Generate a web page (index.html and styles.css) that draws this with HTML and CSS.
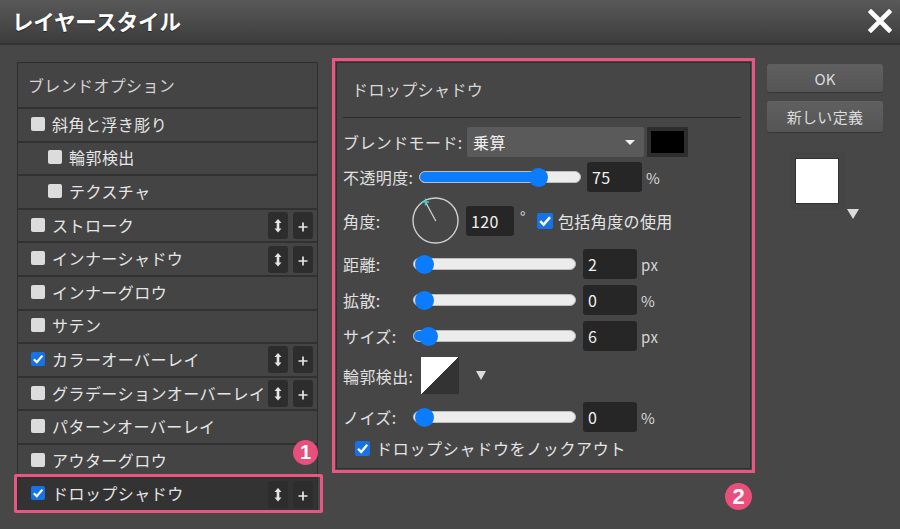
FILE: index.html
```html
<!DOCTYPE html>
<html lang="ja">
<head>
<meta charset="utf-8">
<title>レイヤースタイル</title>
<link rel="stylesheet" href="styles.css">
</head>
<body>
<div class="dialog">
  <header class="titlebar">
    <h1 class="title">レイヤースタイル</h1>
    <svg class="close" width="24" height="24" viewBox="0 0 24 24"><path d="M3 3 L21 21 M21 3 L3 21" stroke="#fff" stroke-width="4.6" stroke-linecap="square"/></svg>
  </header>
  <main class="content">
    <section class="layers">
      <div class="layers-head">ブレンドオプション</div>
      <div class="row"><span class="cb"></span><span class="rtext">斜角と浮き彫り</span></div>
      <div class="row sub"><span class="cb"></span><span class="rtext">輪郭検出</span></div>
      <div class="row sub"><span class="cb"></span><span class="rtext">テクスチャ</span></div>
      <div class="row"><span class="cb"></span><span class="rtext">ストローク</span>
        <span class="tools"><span class="tbtn"><svg width="20" height="27" viewBox="0 0 20 27"><path d="M10 7 L13.5 11 H11.3 V16.5 H13.5 L10 20.5 L6.5 16.5 H8.7 V11 H6.5 Z" fill="#e6e6e6"/></svg></span><span class="tbtn"><svg width="20" height="27" viewBox="0 0 20 27"><path d="M5.5 15 H14.5 M10 10.5 V19.5" stroke="#e6e6e6" stroke-width="1.7"/></svg></span></span></div>
      <div class="row"><span class="cb"></span><span class="rtext">インナーシャドウ</span>
        <span class="tools"><span class="tbtn"><svg width="20" height="27" viewBox="0 0 20 27"><path d="M10 7 L13.5 11 H11.3 V16.5 H13.5 L10 20.5 L6.5 16.5 H8.7 V11 H6.5 Z" fill="#e6e6e6"/></svg></span><span class="tbtn"><svg width="20" height="27" viewBox="0 0 20 27"><path d="M5.5 15 H14.5 M10 10.5 V19.5" stroke="#e6e6e6" stroke-width="1.7"/></svg></span></span></div>
      <div class="row"><span class="cb"></span><span class="rtext">インナーグロウ</span></div>
      <div class="row"><span class="cb"></span><span class="rtext">サテン</span></div>
      <div class="row"><span class="cb checked"><svg width="14" height="14" viewBox="0 0 14 14"><path d="M2.8 7.2 L5.8 10.2 L11.4 3.6" fill="none" stroke="#fff" stroke-width="2.2"/></svg></span><span class="rtext">カラーオーバーレイ</span>
        <span class="tools"><span class="tbtn"><svg width="20" height="27" viewBox="0 0 20 27"><path d="M10 7 L13.5 11 H11.3 V16.5 H13.5 L10 20.5 L6.5 16.5 H8.7 V11 H6.5 Z" fill="#e6e6e6"/></svg></span><span class="tbtn"><svg width="20" height="27" viewBox="0 0 20 27"><path d="M5.5 15 H14.5 M10 10.5 V19.5" stroke="#e6e6e6" stroke-width="1.7"/></svg></span></span></div>
      <div class="row"><span class="cb"></span><span class="rtext">グラデーションオーバーレイ</span>
        <span class="tools"><span class="tbtn"><svg width="20" height="27" viewBox="0 0 20 27"><path d="M10 7 L13.5 11 H11.3 V16.5 H13.5 L10 20.5 L6.5 16.5 H8.7 V11 H6.5 Z" fill="#e6e6e6"/></svg></span><span class="tbtn"><svg width="20" height="27" viewBox="0 0 20 27"><path d="M5.5 15 H14.5 M10 10.5 V19.5" stroke="#e6e6e6" stroke-width="1.7"/></svg></span></span></div>
      <div class="row"><span class="cb"></span><span class="rtext">パターンオーバーレイ</span></div>
      <div class="row"><span class="cb"></span><span class="rtext">アウターグロウ</span></div>
      <div class="row selected"><span class="cb checked"><svg width="14" height="14" viewBox="0 0 14 14"><path d="M2.8 7.2 L5.8 10.2 L11.4 3.6" fill="none" stroke="#fff" stroke-width="2.2"/></svg></span><span class="rtext">ドロップシャドウ</span>
        <span class="tools"><span class="tbtn"><svg width="20" height="27" viewBox="0 0 20 27"><path d="M10 7 L13.5 11 H11.3 V16.5 H13.5 L10 20.5 L6.5 16.5 H8.7 V11 H6.5 Z" fill="#e6e6e6"/></svg></span><span class="tbtn"><svg width="20" height="27" viewBox="0 0 20 27"><path d="M5.5 15 H14.5 M10 10.5 V19.5" stroke="#e6e6e6" stroke-width="1.7"/></svg></span></span></div>
      <span class="badge badge-1">1</span>
    </section>

    <section class="frame">
      <div class="panel">
        <div class="panel-head">ドロップシャドウ</div>

        <div class="prow prow-blend">
          <span class="plabel w-blend">ブレンドモード:</span>
          <div class="select"><span>乗算</span><span class="sel-tri"></span></div>
          <span class="color-swatch"></span>
        </div>

        <div class="prow">
          <span class="plabel w-op">不透明度:</span>
          <div class="slider s-op"><span class="fill" style="width:118px"></span><span class="thumb" style="left:109px"></span></div>
          <span class="num n-op">75</span>
          <span class="unit">%</span>
        </div>

        <div class="prow prow-angle">
          <span class="plabel w-angle">角度:</span>
          <svg class="dial" width="47" height="47" viewBox="0 0 47 47">
            <circle cx="23.5" cy="23.5" r="22.5" fill="none" stroke="#cfcfcf" stroke-width="1.4"/>
            <path d="M23.8 24 L13.5 5" stroke="#cfcfcf" stroke-width="1.3"/>
            <path d="M10 5 H17 M13.5 1.5 V8.5" stroke="#3fd0d0" stroke-width="1.3"/>
          </svg>
          <span class="num n-angle">120</span>
          <span class="unit deg">°</span>
          <span class="cb cb-blue checked"><svg width="16" height="16" viewBox="0 0 14 14"><path d="M2.8 7.2 L5.8 10.2 L11.4 3.6" fill="none" stroke="#fff" stroke-width="2.2"/></svg></span>
          <span class="ctext">包括角度の使用</span>
        </div>

        <div class="prow">
          <span class="plabel">距離:</span>
          <div class="slider"><span class="thumb" style="left:1px"></span></div>
          <span class="num">2</span>
          <span class="unit">px</span>
        </div>

        <div class="prow g6">
          <span class="plabel">拡散:</span>
          <div class="slider"><span class="thumb" style="left:1px"></span></div>
          <span class="num">0</span>
          <span class="unit">%</span>
        </div>

        <div class="prow g6">
          <span class="plabel">サイズ:</span>
          <div class="slider"><span class="fill" style="width:12px"></span><span class="thumb" style="left:5px"></span></div>
          <span class="num">6</span>
          <span class="unit">px</span>
        </div>

        <div class="prow prow-contour g6">
          <span class="plabel w-contour">輪郭検出:</span>
          <span class="contour"></span>
          <span class="tri"></span>
        </div>

        <div class="prow g8">
          <span class="plabel">ノイズ:</span>
          <div class="slider"><span class="thumb" style="left:1px"></span></div>
          <span class="num">0</span>
          <span class="unit">%</span>
        </div>

        <div class="prow prow-ko g6">
          <span class="cb cb-blue checked"><svg width="15" height="15" viewBox="0 0 14 14"><path d="M2.8 7.2 L5.8 10.2 L11.4 3.6" fill="none" stroke="#fff" stroke-width="2.2"/></svg></span>
          <span class="ctext">ドロップシャドウをノックアウト</span>
        </div>
      </div>
      <span class="badge badge-2">2</span>
    </section>

    <aside class="side">
      <button class="btn btn-ok">OK</button>
      <button class="btn btn-new">新しい定義</button>
      <div class="preview">
        <span class="preview-box"></span>
        <span class="tri tri-preview"></span>
      </div>
    </aside>
  </main>
</div>
</body>
</html>
```

FILE: styles.css
```css
* { box-sizing: border-box; }

html, body {
  margin: 0;
  padding: 0;
}

body {
  width: 900px;
  height: 529px;
  overflow: hidden;
  background: #474747;
  font-family: "Noto Sans CJK JP", "Noto Sans", sans-serif;
  color: #e2e2e2;
}

.dialog {
  width: 900px;
  height: 529px;
}

/* title bar */
.titlebar {
  height: 45px;
  display: flex;
  align-items: center;
  justify-content: space-between;
  padding: 0 8px 2px 12px;
  background: linear-gradient(#595959, #3c3c3c);
  border-bottom: 2px solid #333;
}

.title {
  margin: 0;
  font-size: 21.5px;
  font-weight: 700;
  color: #fff;
  letter-spacing: -0.2px;
  line-height: 1;
  text-shadow: 0 1px 1px rgba(0,0,0,0.5);
}

.close { display: block; }

/* content */
.content {
  display: flex;
  align-items: flex-start;
  padding-left: 17px;
}

/* left list */
.layers {
  position: relative;
  width: 301px;
  margin-top: 17px;
  border: 1px solid #2e2e2e;
  background: #444;
}

.layers-head {
  height: 44px;
  display: flex;
  align-items: center;
  padding-left: 10px;
  padding-bottom: 1px;
  font-size: 16px;
  letter-spacing: 0.35px;
  color: #d4d4d4;
}

.row {
  position: relative;
  height: 33.6px;
  display: flex;
  align-items: center;
  padding-left: 13px;
  padding-right: 4px;
  padding-bottom: 2px;
  border-top: 2px solid #313131;
  font-size: 16px;
  letter-spacing: 0.45px;
  color: #e6e6e6;
  white-space: nowrap;
}

.row.sub { padding-left: 30px; }

.row.selected {
  background: #333;
}

.row.selected::after {
  content: "";
  position: absolute;
  left: -4px;
  right: -6px;
  top: -5px;
  bottom: -3px;
  border: 3px solid #ea5682;
  border-radius: 2px;
  pointer-events: none;
}

.rtext {
  margin-left: 7px;
  overflow: hidden;
}

.cb {
  flex: none;
  width: 14px;
  height: 14px;
  border-radius: 2px;
  background: #dcdcdc;
  display: flex;
  align-items: center;
  justify-content: center;
}

.cb.checked { background: #1673e6; }

.tools {
  margin-left: auto;
  display: flex;
  gap: 5px;
  flex: none;
  margin-bottom: -2px;
}

.tbtn {
  width: 20px;
  height: 27px;
  border-radius: 3px;
  background: #2d2d2d;
  display: block;
}

.tbtn svg { display: block; }

.badge {
  position: absolute;
  border-radius: 50%;
  background: #e84f7d;
  color: #fff;
  font-family: "Liberation Sans", Arial, sans-serif;
  font-weight: 700;
  display: flex;
  align-items: center;
  justify-content: center;
}

.badge-1 {
  width: 25px;
  height: 25px;
  left: 275px;
  top: 377px;
  font-size: 20px;
}

.badge-2 {
  width: 27px;
  height: 27px;
  left: 390px;
  top: 422px;
  font-size: 22px;
}

/* middle frame */
.frame {
  position: relative;
  width: 423px;
  height: 415px;
  margin-left: 14px;
  margin-top: 13px;
  border: 3px solid #ea5682;
  padding: 1px;
}

.panel {
  height: 100%;
  border: 1px solid #2f2f2f;
  background: #464646;
  padding: 0 9px 0 6px;
  display: flex;
  flex-direction: column;
}

.panel-head {
  height: 55px;
  flex: none;
  display: flex;
  align-items: center;
  padding-left: 9px;
  padding-bottom: 3px;
  border-bottom: 1px solid #2c2c2c;
  font-size: 16px;
  letter-spacing: 0.4px;
  color: #d8d8d8;
}

.prow {
  display: flex;
  align-items: center;
  height: 30px;
  margin-top: 5px;
  flex: none;
  font-size: 16px;
  letter-spacing: 0.4px;
  color: #e0e0e0;
  white-space: nowrap;
}

.prow-blend { margin-top: 9px; }
.g6 { margin-top: 6px; }
.g8 { margin-top: 8px; }
.prow-angle { height: 47px; }
.prow-contour { height: 37px; }
.prow-ko { height: 20px; padding-left: 12px; }

.plabel {
  width: 70px;
  flex: none;
}

.w-blend { width: 124px; }
.w-op { width: 76px; }
.w-angle { width: 69px; }
.w-contour { width: 78px; }

.select {
  width: 177px;
  height: 30px;
  background: #5a5a5a;
  border-radius: 2px;
  display: flex;
  align-items: center;
  justify-content: space-between;
  padding: 0 9px 0 6px;
  color: #f0f0f0;
  font-size: 16px;
}

.sel-tri {
  width: 0;
  height: 0;
  border-left: 5px solid transparent;
  border-right: 5px solid transparent;
  border-top: 5px solid #f2f2f2;
}

.color-swatch {
  width: 41px;
  height: 30px;
  margin-left: 3px;
  background: #000;
  border: 4px solid #2e2e2e;
}

.slider {
  position: relative;
  width: 163px;
  height: 12px;
  border-radius: 6px;
  background: #ececec;
  border: 1px solid #bdbdbd;
  flex: none;
}

.s-op { width: 162px; }

.slider .fill {
  position: absolute;
  left: 0;
  top: 0;
  bottom: 0;
  border-radius: 6px 0 0 6px;
  background: #0b7cff;
}

.slider .thumb {
  position: absolute;
  top: 50%;
  width: 19px;
  height: 19px;
  margin-top: -9.5px;
  border-radius: 50%;
  background: #0b7cff;
}

.num {
  width: 54px;
  height: 30px;
  margin-left: 7px;
  border-radius: 3px;
  background: #262626;
  color: #f0f0f0;
  display: flex;
  align-items: center;
  padding-left: 5px;
  font-size: 16px;
  flex: none;
}

.n-op { width: 55px; margin-left: 6px; }
.n-angle { width: 48px; margin-left: 7px; }

.unit {
  margin-left: 4px;
  font-size: 15px;
  color: #d6d6d6;
}

.deg { margin-left: 6px; margin-top: -8px; }

.dial { flex: none; display: block; }

.cb-blue {
  width: 16px;
  height: 16px;
  margin-left: 11px;
}

.prow-ko .cb-blue {
  width: 15px;
  height: 15px;
  margin-left: 0;
}

.ctext { margin-left: 5px; color: #e4e4e4; }
.prow-ko .ctext { margin-left: 6px; letter-spacing: 0.7px; }

.contour {
  width: 38px;
  height: 37px;
  background: linear-gradient(to bottom right, #fff 50%, #333 50%);
}

.tri {
  width: 0;
  height: 0;
  margin-left: 17px;
  border-left: 5.5px solid transparent;
  border-right: 5.5px solid transparent;
  border-top: 9px solid #dcdcdc;
}

/* right side */
.side {
  width: 116px;
  margin-left: 12px;
  margin-top: 19px;
  display: flex;
  flex-direction: column;
}

.btn {
  font-family: "Noto Sans CJK JP", "Noto Sans", sans-serif;
  font-size: 15px;
  color: #dcdcdc;
  background: linear-gradient(#606060, #555);
  border: none;
  border-bottom: 1px solid #363636;
  border-radius: 3px;
  padding: 0;
  display: flex;
  align-items: center;
  justify-content: center;
}

.btn-ok { height: 29px; }
.btn-new { height: 32px; margin-top: 8px; letter-spacing: 0.3px; }

.preview {
  display: flex;
  align-items: flex-start;
  margin-top: 25px;
  padding-left: 28px;
}

.preview-box {
  width: 44px;
  height: 46px;
  background: #fff;
  border: 1px solid #303030;
  box-shadow: 0 0 0 6px #454545;
}

.tri-preview {
  margin-left: 8px;
  margin-top: 51px;
  border-left-width: 6px;
  border-right-width: 6px;
  border-top-width: 10px;
}
```
